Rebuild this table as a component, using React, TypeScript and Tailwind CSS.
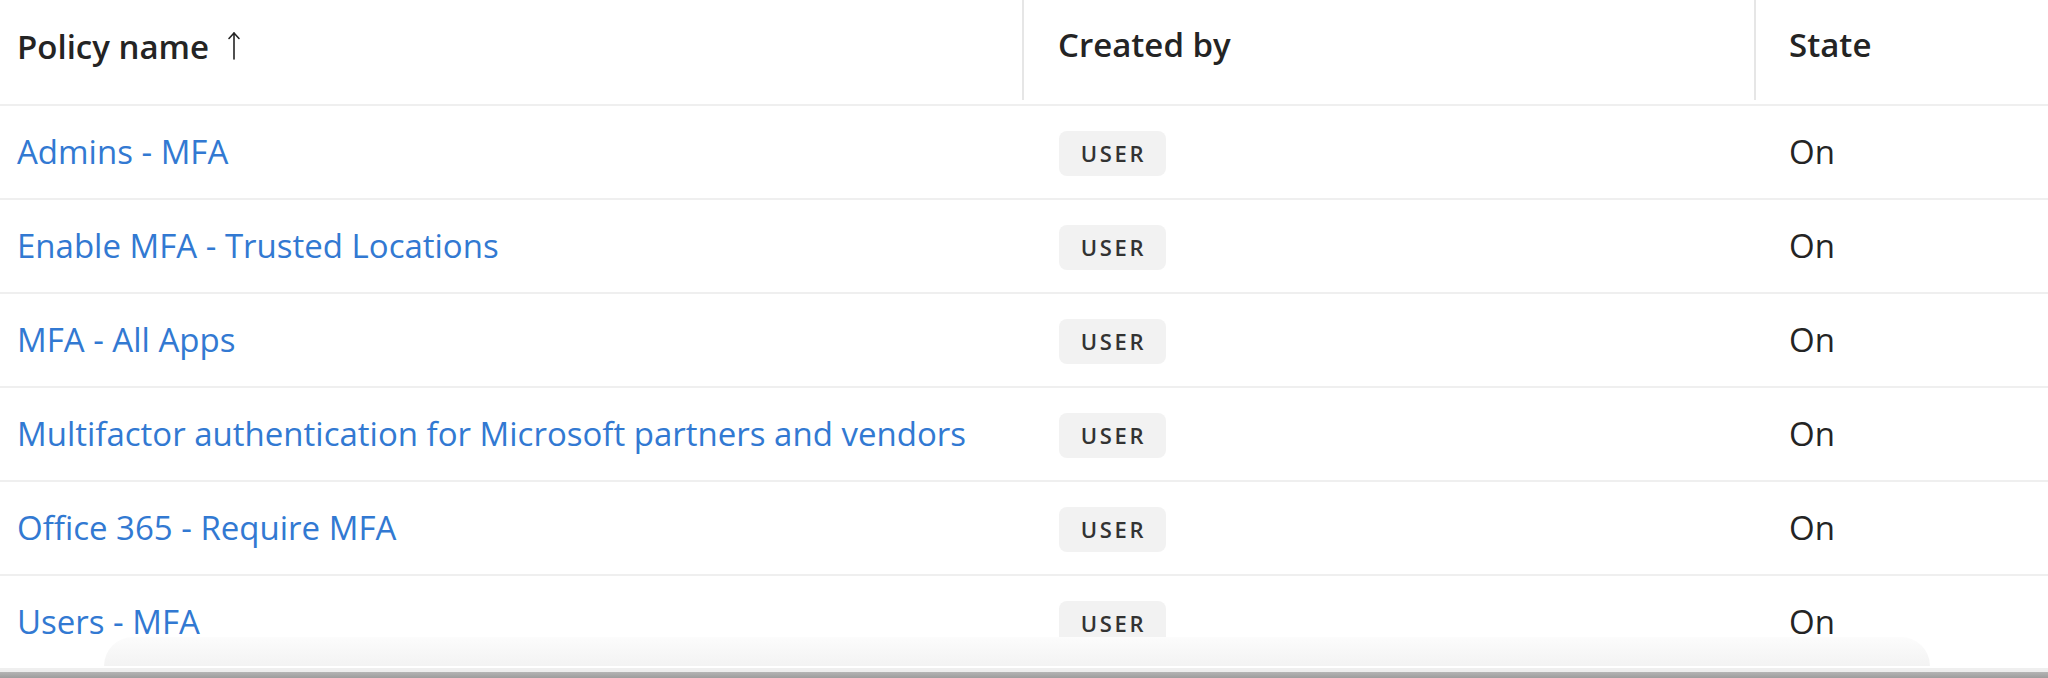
import React from "react";

const rows = [
  "Admins - MFA",
  "Enable MFA - Trusted Locations",
  "MFA - All Apps",
  "Multifactor authentication for Microsoft partners and vendors",
  "Office 365 - Require MFA",
  "Users - MFA",
];

const font = { fontFamily: '"Open Sans", "Noto Sans", sans-serif' };

function ArrowUp() {
  return (
    <svg width="14" height="30" viewBox="0 0 14 30" className="ml-[18px] mt-[-2px]" fill="none" stroke="#242424" strokeWidth="1.6" strokeLinecap="round" strokeLinejoin="round">
      <path d="M7 2 V28" />
      <path d="M2 7.5 L7 2 L12 7.5" />
    </svg>
  );
}

export default function App() {
  return (
    <div className="relative w-[2048px] h-[678px] overflow-hidden bg-white" style={font}>
      <div className="grid grid-cols-[1022px_732px_294px] h-[106px] border-b-2 border-[#efefef]">
        <div className="flex items-center pl-[17px] pb-[10px] text-[33px] font-semibold text-[#242424]">
          Policy name
          <ArrowUp />
        </div>
        <div className="flex items-center pl-[34px] pb-[10px] text-[33px] font-semibold text-[#242424] border-l-2 border-[#e6e6e6] mb-[4px]">
          Created by
        </div>
        <div className="flex items-center pl-[33px] pb-[10px] text-[33px] font-semibold text-[#242424] border-l-2 border-[#e6e6e6] mb-[4px]">
          State
        </div>
      </div>
      {rows.map((r) => (
        <div key={r} className="grid grid-cols-[1022px_732px_294px] h-[94px] border-b-2 border-[#efefef]">
          <div className="flex items-center pl-[17px] text-[33px] text-[#3279d2]">{r}</div>
          <div className="flex items-center pl-[37px] pt-[2px]">
            <span className="flex h-[45px] w-[107px] items-center justify-center rounded-[8px] bg-[#f2f2f2] pl-[2px] text-[22px] font-semibold tracking-[0.12em] text-[#333333]">
              USER
            </span>
          </div>
          <div className="flex items-center pl-[35px] text-[33px] text-[#242424]">On</div>
        </div>
      ))}
      <div className="h-[2px] bg-[#ededed]" />
      <div className="h-[10px] bg-gradient-to-b from-[#b4b4b4] to-[#8e8e8e]" />
      <div className="pointer-events-none absolute left-[104px] right-[118px] top-[637px] h-[29px] rounded-t-[40px] bg-gradient-to-b from-[#fcfcfc] to-[#f3f3f3]" />
    </div>
  );
}
